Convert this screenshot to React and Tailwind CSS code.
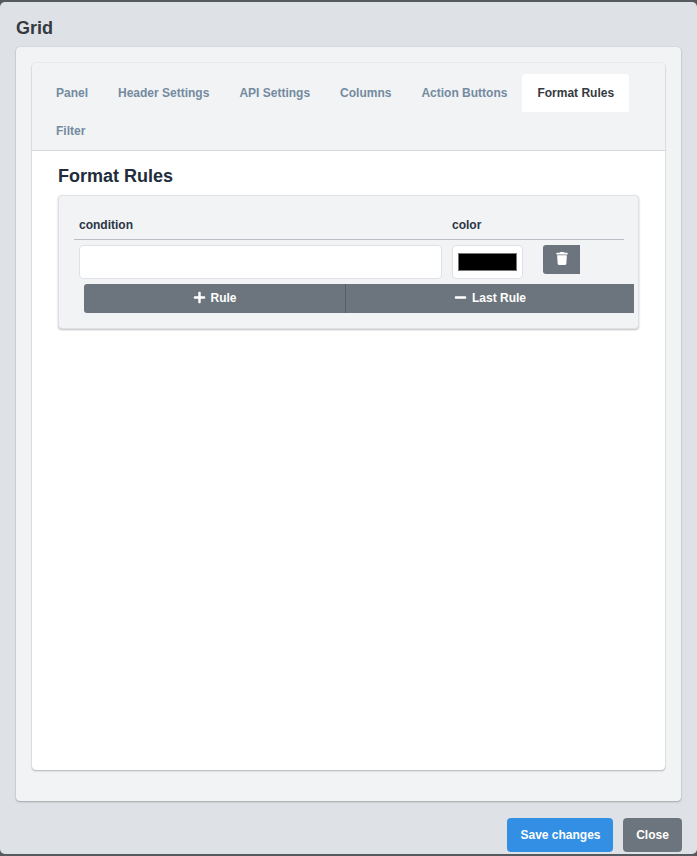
import React from "react";
import { FaTrash, FaPlus, FaMinus } from "react-icons/fa";

const tabs = ["Panel", "Header Settings", "API Settings", "Columns", "Action Buttons", "Format Rules", "Filter"];

export default function App() {
  return (
    <div className="h-[856px] w-[697px] overflow-hidden bg-[#555a5f] pt-[2px] pb-[2px] font-['Liberation_Sans',Arial,sans-serif]">
      <div className="flex h-[852px] flex-col rounded-[5px] bg-[#dee2e6]">
        <h1 className="h-[45px] px-4 pt-[15px] pb-0 text-[18px] leading-[22px] font-bold text-[#343a40]">Grid</h1>
        <div className="mx-4 h-[754px] rounded-[4px] bg-[#f1f3f5] px-4 pt-4 pb-[31px] shadow-[0_1px_2px_rgba(0,0,0,0.25),0_0_1px_rgba(0,0,0,0.2)]">
          <div className="flex h-full flex-col rounded-[4px] bg-white shadow-[0_1px_2px_rgba(0,0,0,0.25),0_0_1px_rgba(0,0,0,0.25)]">
            <div className="flex flex-wrap rounded-t-[4px] border-b border-[#d3d8dc] bg-[#f1f3f5] pt-[11px] pl-[9px]">
              {tabs.map((t) => (
                <div
                  key={t}
                  className={
                    "h-[38px] px-[15px] text-[12px] leading-[38px] font-bold " +
                    (t === "Format Rules" ? "rounded-t-[4px] bg-white text-[#343a40]" : "text-[#748a9f]")
                  }
                >
                  {t}
                </div>
              ))}
            </div>
            <div className="px-[26px]">
              <h2 className="mt-[14px] h-[30px] text-[18px] leading-[22px] font-bold text-[#212d3b]">Format Rules</h2>
              <div className="h-[134px] rounded-[4px] border border-[#dee2e6] bg-[#f1f3f5] px-[15px] pt-4 shadow-[0_1px_2px_rgba(0,0,0,0.25)]">
                <div className="grid h-[28px] w-[550px] grid-cols-[378px_172px] border-b border-[#b9bfc5] text-[12px] leading-[26px] font-bold text-[#2b3644]">
                  <div className="pl-[5px]">condition</div>
                  <div>color</div>
                </div>
                <div className="mt-[5px] flex w-[550px] items-start pl-[5px]">
                  <div className="h-[34px] w-[363px] rounded-[4px] border border-[#dee2e6] bg-white" />
                  <div className="ml-[10px] flex h-[34px] w-[71px] items-center justify-center rounded-[4px] border border-[#dee2e6] bg-white">
                    <div className="h-[18px] w-[59px] border border-[#767676] bg-black" />
                  </div>
                  <button className="ml-5 flex h-[29px] w-[37px] items-start justify-center rounded-l-[3px] bg-[#6c757d] pt-[7px] text-white">
                    <FaTrash className="h-[13px] w-[12px]" />
                  </button>
                </div>
                <div className="mt-[5px] ml-[10px] flex h-[29px] w-[550px] overflow-hidden rounded-l-[3px] bg-[#6c757d] text-[12px] leading-[28px] font-bold text-white">
                  <button className="flex h-[29px] w-[262px] items-start justify-center gap-[4px] border-r border-[#565e64] pl-[1px]">
                    <FaPlus className="mt-[7px] h-[13px] w-[13px]" />
                    Rule
                  </button>
                  <button className="flex h-[29px] flex-1 items-start justify-center gap-[5px]">
                    <FaMinus className="mt-[7px] h-[13px] w-[13px]" />
                    Last Rule
                  </button>
                </div>
              </div>
            </div>
          </div>
        </div>
        <div className="mt-[17px] mr-[15px] flex justify-end gap-[10px]">
          <button className="h-[34px] w-[106px] rounded-[4px] bg-[#338fe3] pl-[1px] text-[12px] font-bold text-white">Save changes</button>
          <button className="h-[34px] w-[59px] rounded-[4px] bg-[#6c757d] text-[12px] font-bold text-white">Close</button>
        </div>
      </div>
    </div>
  );
}
